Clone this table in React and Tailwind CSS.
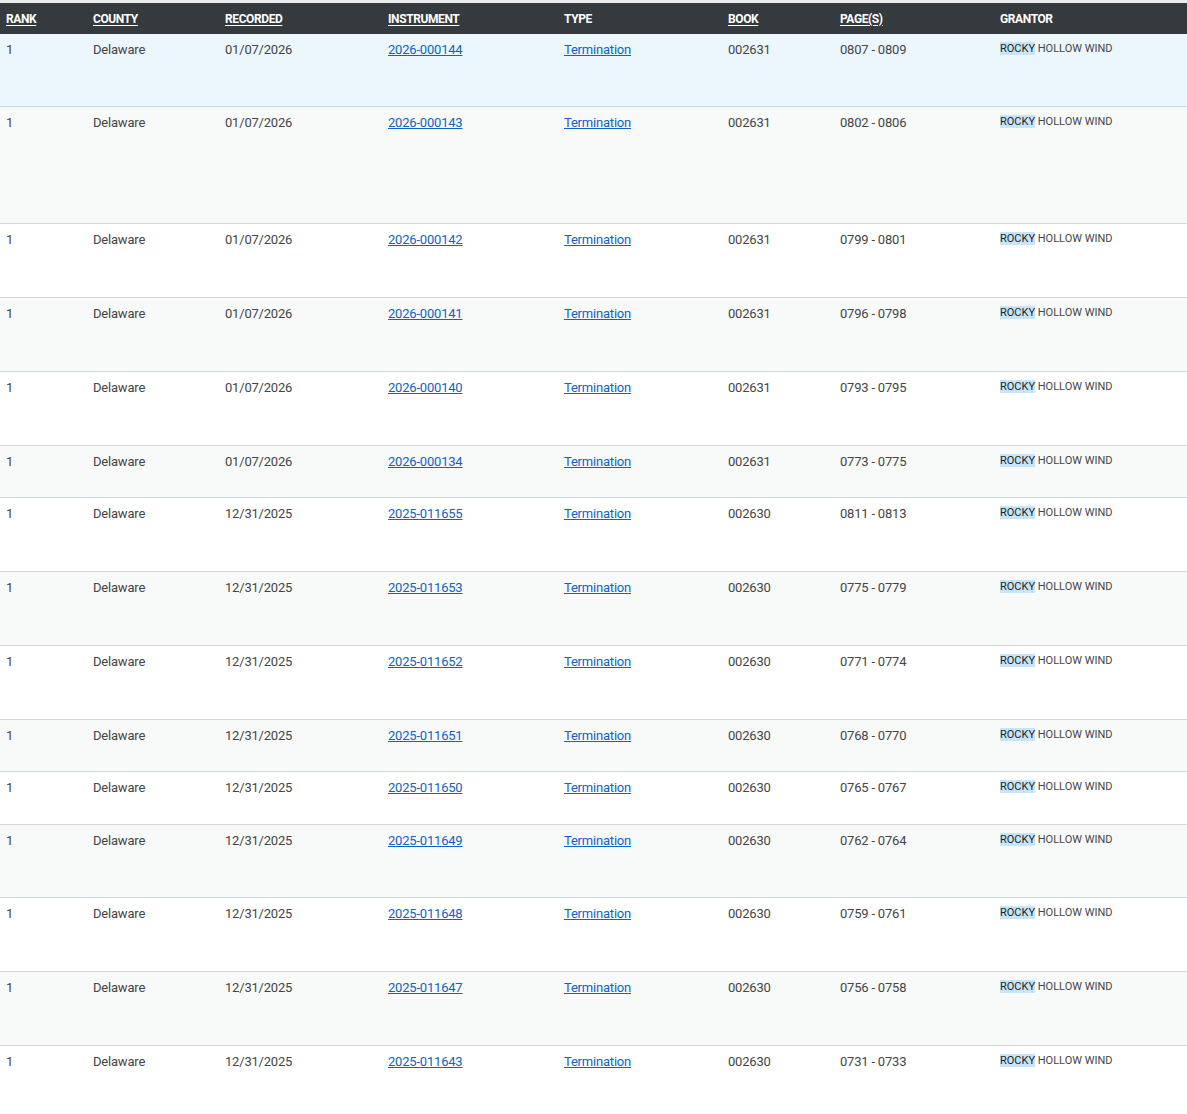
import React from 'react';

const rows = [
  { date: '01/07/2026', inst: '2026-000144', book: '002631', pages: '0807 - 0809', h: 'h-[73px]' },
  { date: '01/07/2026', inst: '2026-000143', book: '002631', pages: '0802 - 0806', h: 'h-[117px]' },
  { date: '01/07/2026', inst: '2026-000142', book: '002631', pages: '0799 - 0801', h: 'h-[74px]' },
  { date: '01/07/2026', inst: '2026-000141', book: '002631', pages: '0796 - 0798', h: 'h-[74px]' },
  { date: '01/07/2026', inst: '2026-000140', book: '002631', pages: '0793 - 0795', h: 'h-[74px]' },
  { date: '01/07/2026', inst: '2026-000134', book: '002631', pages: '0773 - 0775', h: 'h-[52px]' },
  { date: '12/31/2025', inst: '2025-011655', book: '002630', pages: '0811 - 0813', h: 'h-[74px]' },
  { date: '12/31/2025', inst: '2025-011653', book: '002630', pages: '0775 - 0779', h: 'h-[74px]' },
  { date: '12/31/2025', inst: '2025-011652', book: '002630', pages: '0771 - 0774', h: 'h-[74px]' },
  { date: '12/31/2025', inst: '2025-011651', book: '002630', pages: '0768 - 0770', h: 'h-[52px]' },
  { date: '12/31/2025', inst: '2025-011650', book: '002630', pages: '0765 - 0767', h: 'h-[53px]' },
  { date: '12/31/2025', inst: '2025-011649', book: '002630', pages: '0762 - 0764', h: 'h-[73px]' },
  { date: '12/31/2025', inst: '2025-011648', book: '002630', pages: '0759 - 0761', h: 'h-[74px]' },
  { date: '12/31/2025', inst: '2025-011647', book: '002630', pages: '0756 - 0758', h: 'h-[74px]' },
  { date: '12/31/2025', inst: '2025-011643', book: '002630', pages: '0731 - 0733', h: 'h-[74px]' },
];

const cols = ['w-[87px]', 'w-[132px]', 'w-[163px]', 'w-[176px]', 'w-[164px]', 'w-[112px]', 'w-[160px]', 'flex-1'];

function HeadCell({ w, children, sort = true }) {
  return (
    <div className={`${w} shrink-0 pl-[6px]`}>
      <span className={sort ? 'underline underline-offset-2' : ''}>{children}</span>
    </div>
  );
}

export default function App() {
  return (
    <div className="w-[1187px] min-h-[1114px] bg-white border-t-[3px] border-[#ececec]" style={{ fontFamily: 'Roboto, "Liberation Sans", sans-serif' }}>
      {/* header */}
      <div className="flex items-center h-[31px] bg-[#343a3d] text-white text-[12px] font-bold tracking-[-0.4px]">
        <HeadCell w={cols[0]}>RANK</HeadCell>
        <HeadCell w={cols[1]}>COUNTY</HeadCell>
        <HeadCell w={cols[2]}>RECORDED</HeadCell>
        <HeadCell w={cols[3]}>INSTRUMENT</HeadCell>
        <HeadCell w={cols[4]} sort={false}>TYPE</HeadCell>
        <HeadCell w={cols[5]}>BOOK</HeadCell>
        <HeadCell w={cols[6]}>PAGE(S)</HeadCell>
        <HeadCell w={cols[7]} sort={false}>GRANTOR</HeadCell>
      </div>

      {rows.map((r, i) => {
        const bg = i === 0 ? 'bg-[#ebf6fd]' : i % 2 === 1 ? 'bg-[#f8f9f9]' : 'bg-white';
        return (
          <div key={r.inst} className={`flex ${r.h} ${bg} border-b border-[#d3d8d8] pt-[8px] text-[13px] tracking-[-0.2px] text-[#454545] leading-[16px]`}>
            <div className={`${cols[0]} shrink-0 pl-[6px]`}>1</div>
            <div className={`${cols[1]} shrink-0 pl-[6px]`}>Delaware</div>
            <div className={`${cols[2]} shrink-0 pl-[6px]`}>{r.date}</div>
            <div className={`${cols[3]} shrink-0 pl-[6px]`}>
              <a href="#" className="text-[#0f62c6] underline">{r.inst}</a>
            </div>
            <div className={`${cols[4]} shrink-0 pl-[6px]`}>
              <a href="#" className="text-[#0f62c6] underline">Termination</a>
            </div>
            <div className={`${cols[5]} shrink-0 pl-[6px]`}>{r.book}</div>
            <div className={`${cols[6]} shrink-0 pl-[6px]`}>{r.pages}</div>
            <div className={`${cols[7]} pl-[6px] text-[11px] leading-[14px] tracking-normal`}>
              <span className="bg-[#c6e5f8] text-[#1e1e1e]">ROCKY</span> HOLLOW WIND
            </div>
          </div>
        );
      })}
    </div>
  );
}
